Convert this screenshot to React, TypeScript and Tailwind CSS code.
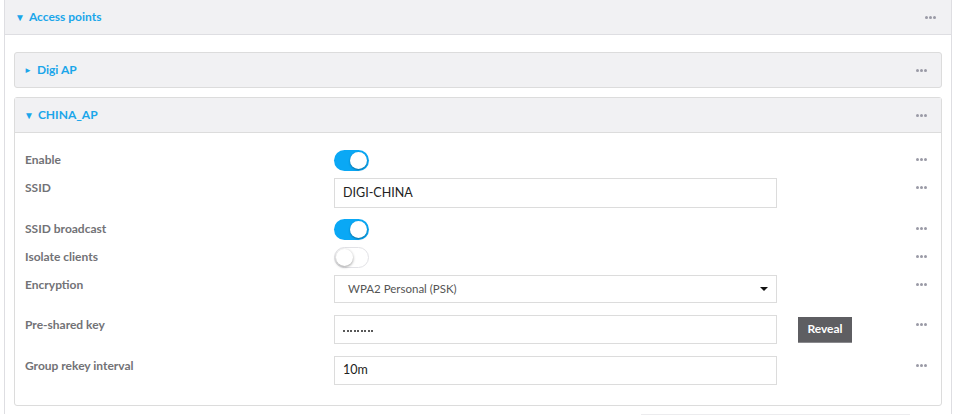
import React from "react";

const Dots = () => (
  <div className="flex gap-[1px] items-center">
    <span className="w-[3px] h-[3px] rounded-full bg-[#9a9aa6]" />
    <span className="w-[3px] h-[3px] rounded-full bg-[#9a9aa6]" />
    <span className="w-[3px] h-[3px] rounded-full bg-[#9a9aa6]" />
  </div>
);

const Toggle = ({ on }: { on: boolean }) => (
  <div
    className={
      on
        ? "relative w-[35px] h-[21px] rounded-full bg-[#0aa8f5]"
        : "relative w-[35px] h-[21px] rounded-full bg-white border border-[#e2e2e6]"
    }
  >
    <span
      className={
        on
          ? "absolute right-[2px] top-[2px] w-[17px] h-[17px] rounded-full bg-white shadow-[0_1px_2px_rgba(0,0,0,0.35)]"
          : "absolute left-[1px] top-[1px] w-[17px] h-[17px] rounded-full bg-white shadow-[0_1px_3px_rgba(0,0,0,0.4)]"
      }
    />
  </div>
);

type RowProps = {
  label: string;
  children: React.ReactNode;
  extra?: React.ReactNode;
  className?: string;
};

const Row = ({ label, children, extra, className }: RowProps) => (
  <div className={"flex items-start " + (className ?? "")}>
    <div className="w-[309px] pt-[2px] text-[12px] leading-4 font-bold text-[#727276]">
      {label}
    </div>
    <div className="w-[443px]">{children}</div>
    <div className="w-[139px] pl-[21px]">{extra}</div>
    <div className="pt-[8px]">
      <Dots />
    </div>
  </div>
);

const inputCls =
  "w-full border border-[#dcdcdc] bg-white flex items-center px-[8px]";

export default function App() {
  return (
    <div
      className="w-[958px] h-[416px] bg-white overflow-hidden"
      style={{ fontFamily: "Lato, 'Open Sans', sans-serif" }}
    >
      <div className="ml-[4px] w-[948px] border-l border-r border-[#dedee2] h-[414px]">
        {/* Outer header */}
        <div className="h-[35px] bg-[#f1f1f3] border-b border-[#dedee2] flex items-center justify-between pl-[10px] pr-[15px]">
          <div className="flex items-center gap-[4px] text-[#1aa6ea] font-bold text-[12px]">
            <span className="text-[10px]">▼</span>
            <span>Access points</span>
          </div>
          <Dots />
        </div>

        <div className="px-[9px] pt-[17px]">
          {/* Digi AP */}
          <div className="h-[36px] bg-[#f1f1f3] border border-[#dcdcdc] rounded-[3px] flex items-center justify-between pl-[9px] pr-[14px]">
            <div className="flex items-center gap-[5px] text-[#1aa6ea] font-bold text-[12px]">
              <span className="text-[8px]">►</span>
              <span>Digi AP</span>
            </div>
            <Dots />
          </div>

          {/* CHINA_AP */}
          <div className="mt-[9px] border border-[#dcdcdc] rounded-[3px] bg-white">
            <div className="h-[35px] bg-[#f1f1f3] border-b border-[#dcdcdc] flex items-center justify-between pl-[9px] pr-[14px]">
              <div className="flex items-center gap-[4px] text-[#1aa6ea] font-bold text-[12px]">
                <span className="text-[10px]">▼</span>
                <span>CHINA_AP</span>
              </div>
              <Dots />
            </div>

            <div className="pl-[10px] pt-[17px] pb-[20px]">
              <Row label="Enable" className="mb-[7px]">
                <Toggle on />
              </Row>
              <Row label="SSID" className="mb-[11px]">
                <div className={inputCls + " h-[30px] text-[12.5px] text-[#222]"}>DIGI-CHINA</div>
              </Row>
              <Row label="SSID broadcast" className="mb-[7px]">
                <Toggle on />
              </Row>
              <Row label="Isolate clients" className="mb-[7px]">
                <Toggle on={false} />
              </Row>
              <Row label="Encryption" className="mb-[12px]">
                <div className={inputCls + " h-[28px] justify-between pl-[13px] pr-[8px] text-[11.5px] text-[#555]"}>
                  <span>WPA2 Personal (PSK)</span>
                  <span className="w-0 h-0 border-l-[4px] border-r-[4px] border-t-[4px] border-l-transparent border-r-transparent border-t-[#111]" />
                </div>
              </Row>
              <Row
                label="Pre-shared key"
                className="mb-[12px]"
                extra={
                  <button className="h-[26px] w-[54px] bg-[#5e5e62] text-white text-[12px] font-bold border-b border-[#8a8a8e]">
                    Reveal
                  </button>
                }
              >
                <div className={inputCls + " h-[29px] gap-[1.5px] pt-[2px]"}>
                  {Array.from({ length: 9 }).map((_, i) => (
                    <span key={i} className="w-[2px] h-[2px] rounded-full bg-[#222]" />
                  ))}
                </div>
              </Row>
              <Row label="Group rekey interval">
                <div className={inputCls + " h-[29px] text-[12.5px] text-[#222]"}>10m</div>
              </Row>
            </div>
          </div>

          <div className="ml-[627px] mt-[8px] w-[269px] border-t border-[#ececee]" />
        </div>
      </div>
    </div>
  );
}
